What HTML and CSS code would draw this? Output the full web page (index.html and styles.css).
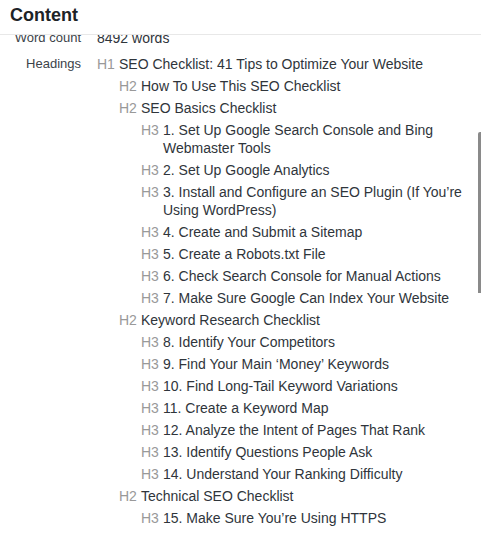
FILE: index.html
```html
<!DOCTYPE html>
<html>
<head>
<meta charset="utf-8">
<link rel="stylesheet" href="styles.css">
</head>
<body>
<div class="panel">
  <div class="panel-header">Content</div>
  <div class="panel-body">
    <div class="details">
      <div class="label">Word count</div>
      <div class="value">8492 words</div>
      <div class="label">Headings</div>
      <div class="value">
        <ul class="headings">
          <li class="h h1"><span class="tag">H1</span><span class="txt">SEO Checklist: 41 Tips to Optimize Your Website</span></li>
          <li class="h h2"><span class="tag">H2</span><span class="txt">How To Use This SEO Checklist</span></li>
          <li class="h h2"><span class="tag">H2</span><span class="txt">SEO Basics Checklist</span></li>
          <li class="h h3"><span class="tag">H3</span><span class="txt">1. Set Up Google Search Console and Bing Webmaster Tools</span></li>
          <li class="h h3"><span class="tag">H3</span><span class="txt">2. Set Up Google Analytics</span></li>
          <li class="h h3"><span class="tag">H3</span><span class="txt">3. Install and Configure an SEO Plugin (If You’re Using WordPress)</span></li>
          <li class="h h3"><span class="tag">H3</span><span class="txt">4. Create and Submit a Sitemap</span></li>
          <li class="h h3"><span class="tag">H3</span><span class="txt">5. Create a Robots.txt File</span></li>
          <li class="h h3"><span class="tag">H3</span><span class="txt">6. Check Search Console for Manual Actions</span></li>
          <li class="h h3"><span class="tag">H3</span><span class="txt">7. Make Sure Google Can Index Your Website</span></li>
          <li class="h h2"><span class="tag">H2</span><span class="txt">Keyword Research Checklist</span></li>
          <li class="h h3"><span class="tag">H3</span><span class="txt">8. Identify Your Competitors</span></li>
          <li class="h h3"><span class="tag">H3</span><span class="txt">9. Find Your Main ‘Money’ Keywords</span></li>
          <li class="h h3"><span class="tag">H3</span><span class="txt">10. Find Long-Tail Keyword Variations</span></li>
          <li class="h h3"><span class="tag">H3</span><span class="txt">11. Create a Keyword Map</span></li>
          <li class="h h3"><span class="tag">H3</span><span class="txt">12. Analyze the Intent of Pages That Rank</span></li>
          <li class="h h3"><span class="tag">H3</span><span class="txt">13. Identify Questions People Ask</span></li>
          <li class="h h3"><span class="tag">H3</span><span class="txt">14. Understand Your Ranking Difficulty</span></li>
          <li class="h h2"><span class="tag">H2</span><span class="txt">Technical SEO Checklist</span></li>
          <li class="h h3"><span class="tag">H3</span><span class="txt">15. Make Sure You’re Using HTTPS</span></li>
        </ul>
      </div>
    </div>
    <div class="scroll-thumb"></div>
  </div>
</div>
</body>
</html>
```

FILE: styles.css
```css
html, body {
  margin: 0;
  padding: 0;
  background: #fff;
}
body {
  font-family: "Liberation Sans", Arial, sans-serif;
  color: #2f353b;
}
.panel {
  width: 481px;
  height: 534px;
  display: flex;
  flex-direction: column;
  overflow: hidden;
}
.panel-header {
  font-size: 18px;
  font-weight: bold;
  line-height: 22px;
  color: #1d2327;
  padding: 4px 10px 8px 10px;
  border-bottom: 1px solid #e8e8e8;
}
.panel-body {
  position: relative;
  flex: 1;
  overflow: hidden;
}
.details {
  display: grid;
  grid-template-columns: 81px 1fr;
  column-gap: 16px;
  row-gap: 8px;
  margin-top: -6px;
  padding-right: 6px;
}
.label {
  text-align: right;
  font-size: 13px;
  line-height: 18px;
  color: #3c434a;
}
.value {
  font-size: 14px;
  line-height: 18px;
}
.headings {
  list-style: none;
  margin: 0;
  padding: 0;
  display: flex;
  flex-direction: column;
  gap: 4px;
}
.h {
  display: flex;
}
.h2 { padding-left: 22px; }
.h3 { padding-left: 44px; }
.tag {
  flex: 0 0 22px;
  color: #999;
}
.txt {
  flex: 1;
}
.scroll-thumb {
  position: absolute;
  right: 0;
  top: 97px;
  width: 3px;
  height: 161px;
  background: #8a8a8a;
  border-radius: 2px 0 0 0;
}
```
